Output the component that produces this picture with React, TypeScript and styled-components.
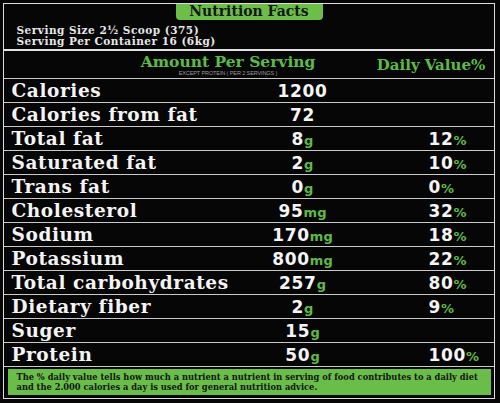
import styled, { createGlobalStyle } from 'styled-components';

const GlobalStyle = createGlobalStyle`
  html, body {
    margin: 0;
    padding: 0;
    background: #060606;
  }
  * {
    box-sizing: border-box;
  }
`;

const GREEN = '#5cbb47';

type Nutrient = {
  name: string;
  amount: string;
  unit?: string;
  daily?: string;
};

const nutrients: Nutrient[] = [
  { name: 'Calories', amount: '1200' },
  { name: 'Calories from fat', amount: '72' },
  { name: 'Total fat', amount: '8', unit: 'g', daily: '12' },
  { name: 'Saturated fat', amount: '2', unit: 'g', daily: '10' },
  { name: 'Trans fat', amount: '0', unit: 'g', daily: '0' },
  { name: 'Cholesterol', amount: '95', unit: 'mg', daily: '32' },
  { name: 'Sodium', amount: '170', unit: 'mg', daily: '18' },
  { name: 'Potassium', amount: '800', unit: 'mg', daily: '22' },
  { name: 'Total carbohydrates', amount: '257', unit: 'g', daily: '80' },
  { name: 'Dietary fiber', amount: '2', unit: 'g', daily: '9' },
  { name: 'Suger', amount: '15', unit: 'g' },
  { name: 'Protein', amount: '50', unit: 'g', daily: '100' },
];

const App = () => {
  return (
    <>
      <GlobalStyle />
      <Panel>
        <Top>
          <Tab>Nutrition Facts</Tab>
          <Serving>
            <div>Serving Size 2½ Scoop (375)</div>
            <div>Serving Per Container 16 (6kg)</div>
          </Serving>
        </Top>
        <HeaderRow>
          <AmountHead>
            <HeadTitle>Amount Per Serving</HeadTitle>
            <HeadNote>EXCEPT PROTEIN ( PER 2 SERVINGS )</HeadNote>
          </AmountHead>
          <DailyHead>Daily Value%</DailyHead>
        </HeaderRow>
        {nutrients.map((n) => (
          <Row key={n.name}>
            <Label>{n.name}</Label>
            <Value>
              {n.amount}
              {n.unit && <Unit>{n.unit}</Unit>}
            </Value>
            <Daily>
              {n.daily && (
                <>
                  {n.daily}
                  <Unit>%</Unit>
                </>
              )}
            </Daily>
          </Row>
        ))}
        <FooterWrap>
          <Note>
            The % daily value tells how much a nutrient a nutrient in serving of food contributes to a daily diet
            <br />
            and the 2.000 calories a day is used for general nutrition advice.
          </Note>
        </FooterWrap>
      </Panel>
    </>
  );
};

const Panel = styled.div`
  margin: 3px 0 0 3px;
  width: 492px;
  height: 396px;
  border: 1.5px solid #dcdcdc;
  display: flex;
  flex-direction: column;
  overflow: hidden;
`;

const Top = styled.div`
  height: 45px;
  display: flex;
  flex-direction: column;
`;

const Tab = styled.div`
  align-self: center;
  width: 147px;
  height: 15.5px;
  background: #6bbf48;
  border-radius: 0 0 4px 4px;
  color: #161616;
  font-family: 'DejaVu Serif', serif;
  font-weight: 700;
  font-size: 14px;
  line-height: 15px;
  text-align: center;
`;

const Serving = styled.div`
  margin-top: 5px;
  padding-left: 12.5px;
  color: #e8e8e8;
  font-family: 'DejaVu Serif', serif;
  font-weight: 700;
  font-size: 10.5px;
  line-height: 11px;
  letter-spacing: 0.5px;
`;

const HeaderRow = styled.div`
  height: 29px;
  border-top: 2px solid #e2e2e2;
  display: grid;
  grid-template-columns: 348px 1fr;
`;

const AmountHead = styled.div`
  padding-left: 100px;
  padding-top: 2px;
  display: flex;
  flex-direction: column;
  align-items: center;
`;

const HeadTitle = styled.div`
  color: ${GREEN};
  font-family: 'DejaVu Serif', serif;
  font-weight: 700;
  font-size: 15.5px;
  line-height: 17px;
`;

const HeadNote = styled.div`
  color: #9a9a9a;
  font-family: 'Liberation Sans', sans-serif;
  font-size: 5.5px;
  line-height: 7px;
  letter-spacing: -0.1px;
`;

const DailyHead = styled.div`
  padding-left: 16px;
  padding-top: 6px;
  text-align: center;
  color: ${GREEN};
  font-family: 'DejaVu Serif', serif;
  font-weight: 700;
  font-size: 15px;
  line-height: 17px;
`;

const Row = styled.div`
  height: 24px;
  border-top: 1.5px solid #c9c9c9;
  display: grid;
  grid-template-columns: 241px 100px 1fr;
  align-items: center;
  padding-left: 7.5px;
`;

const Label = styled.div`
  color: #f4f4f4;
  font-family: 'DejaVu Serif', serif;
  font-weight: 700;
  font-size: 18.5px;
  letter-spacing: 0.6px;
  white-space: nowrap;
`;

const Value = styled.div`
  text-align: center;
  color: #f4f4f4;
  font-family: 'DejaVu Sans', sans-serif;
  font-weight: 700;
  font-size: 17px;
  letter-spacing: 0.7px;
  white-space: nowrap;
`;

const Daily = styled(Value)`
  text-align: left;
  padding-left: 76px;
`;

const Unit = styled.span`
  color: ${GREEN};
  font-size: 13px;
  letter-spacing: 0;
`;

const FooterWrap = styled.div`
  border-top: 1.5px solid #c9c9c9;
  padding: 2px 3.5px 0;
`;

const Note = styled.div`
  height: 26px;
  background: #69bd49;
  padding: 2.5px 0 0 9px;
  color: #141414;
  font-family: 'DejaVu Serif', serif;
  font-weight: 700;
  font-size: 8.3px;
  line-height: 10px;
  white-space: nowrap;
`;

export default App;
